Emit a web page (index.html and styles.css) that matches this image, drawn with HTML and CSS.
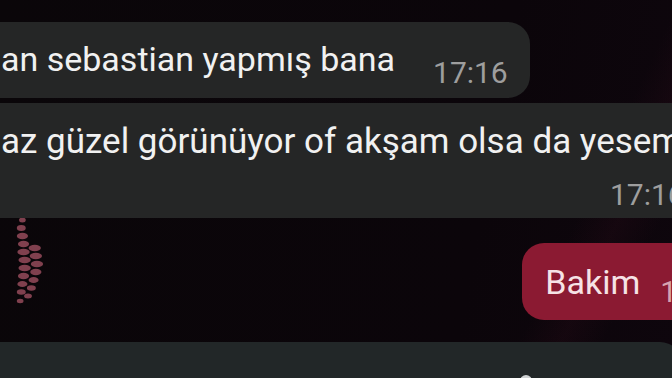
FILE: index.html
```html
<!DOCTYPE html>
<html>
<head>
  <title>Sohbet</title>
  <meta charset="UTF-8">
  <link rel="stylesheet" href="styles.css">
</head>
<body>
  <!-- duvar kağıdı süsü -->
  <svg class="wallpaper-net" width="56" height="100" viewBox="0 0 50 100" preserveAspectRatio="none">
    <g fill="#a85466" opacity="0.75">
      <ellipse cx="20" cy="6" rx="3" ry="2.5"/>
      <ellipse cx="19" cy="14" rx="4" ry="3"/>
      <ellipse cx="20" cy="22" rx="5" ry="3.2"/>
      <ellipse cx="21" cy="30" rx="5" ry="3.2"/>
      <ellipse cx="31" cy="34" rx="5.5" ry="3.2"/>
      <ellipse cx="21" cy="38" rx="5.5" ry="3.2"/>
      <ellipse cx="32" cy="42" rx="5.5" ry="3.2"/>
      <ellipse cx="22" cy="46" rx="5.5" ry="3.2"/>
      <ellipse cx="33" cy="50" rx="5.5" ry="3.2"/>
      <ellipse cx="22" cy="54" rx="5.5" ry="3.2"/>
      <ellipse cx="32" cy="58" rx="5" ry="3.2"/>
      <ellipse cx="21" cy="62" rx="5" ry="3.2"/>
      <ellipse cx="30" cy="66" rx="4.5" ry="3"/>
      <ellipse cx="20" cy="70" rx="4.5" ry="3"/>
      <ellipse cx="28" cy="74" rx="4" ry="2.8"/>
      <ellipse cx="19" cy="78" rx="4" ry="2.8"/>
      <ellipse cx="25" cy="82" rx="3.5" ry="2.5"/>
      <ellipse cx="18" cy="87" rx="3" ry="2.2"/>
    </g>
  </svg>

  <div class="chat">
    <div class="bubble incoming first">
      <span class="text">an sebastian yapmış bana</span>
      <span class="time">17:16</span>
    </div>

    <div class="bubble incoming long">
      <span class="text">az güzel görünüyor of akşam olsa da yesem</span>
      <span class="time">17:16</span>
    </div>

    <div class="bubble outgoing">
      <span class="text">Bakim</span>
      <span class="time">17:16</span>
    </div>

    <div class="composer">
      <span class="composer-dot"></span>
    </div>
  </div>
</body>
</html>
```

FILE: styles.css
```css
body {
  margin: 0;
  width: 672px;
  height: 378px;
  overflow: hidden;
  position: relative;
  font-family: Roboto, "Noto Sans", sans-serif;
  background-color: #0a0509;
  background-image:
    linear-gradient(115deg, transparent 80%, rgba(60, 15, 32, 0.18) 85%, transparent 90%),
    linear-gradient(100deg, #0a0609 0%, #0b050a 70%, #0e060d 100%);
}
.wallpaper-net {
  position: absolute;
  left: 0;
  top: 214px;
}
.chat {
  position: relative;
  display: flex;
  flex-direction: column;
  padding-top: 22px;
}
.bubble {
  display: flex;
  align-items: flex-start;
  white-space: nowrap;
  border-radius: 22px;
}
.text {
  font-size: 34px;
  line-height: 40px;
}
.time {
  font-size: 30px;
  line-height: 30px;
}
.incoming {
  background-color: #252626;
  color: #f1f1f1;
}
.incoming .time {
  color: #9e9e9e;
}
.first {
  align-self: flex-start;
  margin-left: -24px;
  padding: 17px 22px 10px 25px;
  gap: 38px;
}
.first .time {
  margin-top: 19px;
}
.long {
  flex-direction: column;
  margin-top: 5px;
  margin-left: -24px;
  width: 760px;
  padding: 19px 0 8px 25px;
}
.long .text {
  font-size: 35px;
}
.long .time {
  margin-top: 18px;
  padding-left: 609px;
}
.outgoing {
  align-self: flex-end;
  margin-top: 25px;
  margin-right: -93px;
  padding: 19px 30px 13px 23px;
  gap: 20px;
  background-color: #8b1a32;
  color: #f6e2e6;
}
.outgoing .time {
  margin-top: 15px;
  color: #d7a3af;
}
.composer {
  margin-top: 22px;
  margin-left: -30px;
  height: 60px;
  background-color: #222728;
  border-top-right-radius: 22px;
  width: 712px;
  display: flex;
  justify-content: flex-end;
  padding-right: 150px;
  box-sizing: border-box;
}
.composer-dot {
  width: 12px;
  height: 12px;
  margin-top: 33px;
  border-radius: 50%;
  background-color: #cfd2d3;
}
```
